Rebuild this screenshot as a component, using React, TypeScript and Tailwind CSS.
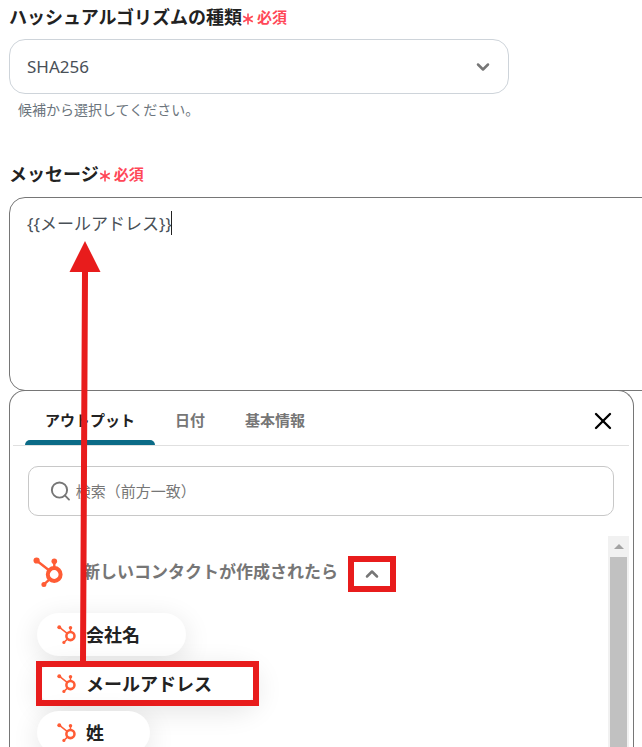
import { useState } from "react";
import type { ReactNode } from "react";
import { ChevronDown, ChevronUp, Search, X } from "lucide-react";

const TABS = ["アウトプット", "日付", "基本情報"];
const OUTPUTS = ["会社名", "メールアドレス", "姓"];
const SELECTED_OUTPUT = "メールアドレス";

function HubSpotIcon({ className }: { className: string }) {
  return (
    <svg viewBox="0 0 30 30" className={className} fill="#ff5c35" stroke="#ff5c35" aria-hidden="true">
      <path d="M3.5 3.5 16 13.2M21.3 4.5V11M16.5 22.3 11 27.3" strokeWidth="2.4" fill="none" />
      <circle cx="3.6" cy="3.5" r="3.1" stroke="none" />
      <circle cx="21.3" cy="4.2" r="2.8" stroke="none" />
      <circle cx="10.9" cy="27.5" r="2.5" stroke="none" />
      <circle cx="21.2" cy="17.5" r="6.4" fill="none" strokeWidth="4" />
    </svg>
  );
}

function FieldLabel({ htmlFor, children }: { htmlFor: string; children: ReactNode }) {
  return (
    <label htmlFor={htmlFor} className="flex items-center text-lg leading-7 font-bold text-[#222]">
      {children}
      <span className="flex items-center gap-[3px] text-[15px] text-[#ff4757]">
        <svg viewBox="0 0 12 12" className="mt-1 size-3" stroke="currentColor" strokeWidth="1.6" aria-hidden="true">
          <path d="M6 .5v11M1.2 3.2l9.6 5.6M10.8 3.2 1.2 8.8" />
        </svg>
        必須
      </span>
    </label>
  );
}

function Highlight({ className }: { className: string }) {
  return <span className={`pointer-events-none absolute border-6 border-[#e81c1c] ${className}`} />;
}

function OutputPicker() {
  const [tab, setTab] = useState(TABS[0]);

  return (
    <section className="z-10 -mt-px mr-2 flex min-h-0 flex-1 flex-col rounded-t-2xl border border-b-0 border-[#767676] pr-1 pl-[3px]">
      <div className="flex h-[55px] shrink-0 items-stretch border-b border-[#e0e0e0] px-3">
        {TABS.map((name) => (
          <button
            key={name}
            type="button"
            onClick={() => setTab(name)}
            className={`relative px-5 pt-1 text-[15px] leading-5 font-bold ${tab === name ? "text-[#222]" : "text-[#767676]"}`}
          >
            {name}
            {tab === name && <span className="absolute inset-x-0 bottom-0 h-[5px] rounded-t-md bg-[#0b6b87]" />}
          </button>
        ))}
        <button type="button" aria-label="閉じる" className="ml-auto pt-[6px] text-black">
          <X className="size-7" strokeWidth={2} />
        </button>
      </div>

      <div className="px-[15px] py-5">
        <div className="flex h-[50px] items-center gap-1 rounded-[10px] border border-[#c8c8c8] pl-5">
          <Search className="size-6 text-[#767676]" strokeWidth={2} />
          <input
            type="search"
            aria-label="検索"
            placeholder="検索（前方一致）"
            className="w-full bg-transparent text-[15px] text-[#222] outline-none placeholder:text-[#767676]"
          />
        </div>
      </div>

      <div className="flex min-h-0 flex-1">
        <div className="min-w-0 flex-1 overflow-hidden pt-4 pl-5">
          <div className="flex h-10 items-center">
            <HubSpotIcon className="size-[30px] shrink-0" />
            <h3 className="ml-5 text-[17px] leading-7 font-bold whitespace-nowrap text-[#767676]">
              新しいコンタクトが作成されたら
            </h3>
            <button
              type="button"
              aria-label="折りたたむ"
              className="relative mt-1 ml-[10px] flex h-9 w-12 items-center justify-center text-[#767676]"
            >
              <ChevronUp className="size-5" strokeWidth={3} />
              <Highlight className="inset-0" />
            </button>
          </div>

          <ul className="mt-[21px] flex flex-col items-start gap-[6px] pl-1">
            {OUTPUTS.map((name) => (
              <li key={name} className="relative">
                <button
                  type="button"
                  className="flex h-[43px] items-center gap-[10px] rounded-full bg-white pr-[46px] pl-5 text-lg font-bold text-[#222] shadow-[0_6px_28px_rgba(0,0,0,0.11)]"
                >
                  <HubSpotIcon className="size-[19px]" />
                  {name}
                </button>
                {name === SELECTED_OUTPUT && <Highlight className="-inset-px" />}
              </li>
            ))}
          </ul>
        </div>

        <div className="flex w-[21px] flex-col items-center bg-[#f1f1f1]" aria-hidden="true">
          <div className="flex h-[21px] items-center">
            <span className="border-x-5 border-b-5 border-x-transparent border-b-[#a3a3a3]" />
          </div>
          <div className="w-[17px] flex-1 bg-[#c1c1c1]" />
        </div>
      </div>
    </section>
  );
}

export default function App() {
  const [message, setMessage] = useState("{{メールアドレス}}");

  return (
    <main className="relative flex h-screen flex-col overflow-hidden bg-white pt-[3px] pl-[9px] font-['Noto_Sans','Noto_Sans_CJK_JP',sans-serif]">
      <FieldLabel htmlFor="algorithm">ハッシュアルゴリズムの種類</FieldLabel>
      <div className="relative mt-2 w-full max-w-[500px]">
        <select
          id="algorithm"
          className="h-[55px] w-full appearance-none rounded-2xl border border-[#ced4da] bg-white px-[17px] text-[17px] text-[#495057]"
        >
          <option>SHA256</option>
        </select>
        <ChevronDown className="pointer-events-none absolute top-[18px] right-4 size-5 text-[#767676]" strokeWidth={3} />
      </div>
      <p className="mt-[6px] pl-[9px] text-sm leading-5 text-[#6c757d]">候補から選択してください。</p>

      <div className="mt-10">
        <FieldLabel htmlFor="message">メッセージ</FieldLabel>
      </div>
      <div className="relative mt-[9px] -mr-5 shrink-0">
        <textarea
          id="message"
          value={message}
          onChange={(e) => setMessage(e.target.value)}
          className="block h-[194px] w-full resize-none rounded-2xl border border-[#767676] px-[17px] py-3 text-[17px] leading-7 text-[#495057] outline-none"
        />
        <span className="absolute top-[14px] left-[162px] h-6 w-px bg-[#222]" />
      </div>
      <OutputPicker />

      <svg
        viewBox="0 0 32 421"
        className="pointer-events-none absolute top-[241px] left-[69px] z-20 h-[421px] w-8"
        fill="#e81c1c"
        aria-hidden="true"
      >
        <path d="M16 0 31.5 31H19L17 421H11L13 31H.5Z" />
      </svg>
    </main>
  );
}
